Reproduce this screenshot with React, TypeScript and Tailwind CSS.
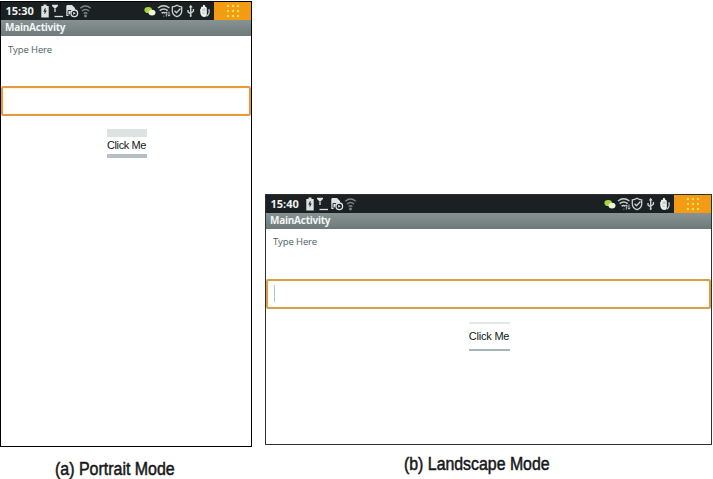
function LeftIcons() {
  return (
    <svg width="54" height="18" viewBox="0 0 54 18" fill="none" stroke="#dce2e1" strokeWidth="1.3">
      <path d="M4.5 2.5h3v1.6H9.7v11.4H2.3V4.1h2.2z" fill="#dce2e1" stroke="none" />
      <path d="M6.3 6 4.6 9.5h1.3l-.2 2.4 1.7-3.2H6.3z" fill="#1b2022" stroke="#1b2022" strokeWidth=".3" />
      <path d="M13 3.5h6M14 4l2 2 2-2M16 3.5V10" strokeWidth="1.3" />
      <path d="M15.5 14.5h8.5" strokeWidth="1.3" />
      <path d="M28 3h5l3 3v2l-4 1-2 5h-2.7V4z" fill="#dce2e1" stroke="none" />
      <path d="M29 8.5h3.5M29 8.5v4.5h2" stroke="#1b2022" strokeWidth=".9" />
      <circle cx="35.3" cy="11.3" r="3.3" />
      <path d="M34.2 9.8v3l2.5-1.5z" fill="#dce2e1" stroke="none" />
      <g stroke="#7d8685" strokeWidth="1.4">
        <path d="M41.3 6.2q5.2-4.4 10.4 0M43 9q3.5-3.2 7 0M44.6 11.5q1.9-1.7 3.8 0" />
        <circle cx="46.5" cy="14" r=".7" fill="#899291" />
      </g>
    </svg>
  );
}

function RightIcons() {
  return (
    <svg width="72" height="18" viewBox="0 0 72 18" fill="none" stroke="#c9d0ce" strokeWidth="1.3">
      <ellipse cx="6.2" cy="8" rx="3.8" ry="3.1" fill="#a6d63c" stroke="none" />
      <ellipse cx="10" cy="10.6" rx="3.5" ry="2.9" fill="#eef5d8" stroke="none" />
      <path d="M16 6q5.7-4.5 11.4 0M17.7 8.7q4-3.2 8 0M19.6 11.2q1.8-1.4 3.6-.3" strokeWidth="1.5" />
      <path d="M21.5 14.2h.8M24.3 10v4.5M22.8 11.5l1.5-1.7 1.5 1.7M27 9.5V14M25.7 12.7l1.3 1.5 1.3-1.5" strokeWidth=".9" />
      <path d="M35 3.3q2.2 1.5 4.7 1.6V9q0 3.8-4.7 5.7-4.7-1.9-4.7-5.7V4.9q2.5-.1 4.7-1.6z" />
      <path d="m32.5 8.7 2 2 4-4.2" />
      <path d="M48.7 4v10M46 8v1.8l2.7 2.2M51.4 7v2.2l-2.7 2.1" strokeWidth="1.4" />
      <path d="m46.8 5.4 1.9-2.6 1.9 2.6z" fill="#d3dad8" stroke="none" />
      <circle cx="48.7" cy="14" r="1" fill="#d3dad8" stroke="none" />
      <path d="M59 6.4q-.3-1.7.8-1.7l.9.3q0-2.2 1.2-2.2t1.3 2q1.6-.2 1.6 1.8v6.3q-.2 2-2.4 2-3.4 0-4-3.6l-.3-3.6q0-1 .9-1.3z" fill="#eef1f0" stroke="none" />
      <path d="M66.8 7.2q1.6 4.6-2.2 7" strokeWidth="1.3" />
      <path d="M61 6.5v3M62.8 6.2v3M60.3 11.2h2.6" stroke="#8f9997" strokeWidth=".7" />
    </svg>
  );
}

function AppGrid() {
  return (
    <div className="flex h-full w-[37px] items-center justify-center bg-[#f39b13] pl-px">
      <div className="grid grid-cols-3 gap-[3px]">
        {Array.from({ length: 9 }, (_, i) => (
          <span key={i} className="size-[2px] bg-[#fbe05c] shadow-[0_0_1px_#f8d04c]" />
        ))}
      </div>
    </div>
  );
}

function Header({ time }: { time: string }) {
  return (
    <>
      <div className="flex h-[18px] items-center bg-[#1b2022]">
        <span className="w-[38px] shrink-0 pl-[4.5px] text-[11px] leading-[18px] font-bold text-[#f0f2f2]">{time}</span>
        <LeftIcons />
        <div className="ml-auto flex h-full">
          <RightIcons />
          <AppGrid />
        </div>
      </div>
      <div className="h-[16px] bg-linear-to-b from-[#879392] to-[#6e7a7a] pl-[4px] text-[10px] leading-[15px] font-bold tracking-[-0.25px] text-[#f2f5f5]">
        MainActivity
      </div>
    </>
  );
}

export default function App() {
  return (
    <main className="flex h-[479px] w-[713px] items-start overflow-hidden bg-white font-['Open_Sans','Noto_Sans',sans-serif]">
      <figure className="w-[252px] pt-px">
        <div className="h-[446px] border border-black bg-white">
          <Header time="15:30" />
          <p className="mt-[6px] ml-[7px] h-[16px] text-[9.5px] leading-[16px] tracking-[-0.12px] text-[#4c6262]">Type Here</p>
          <div className="mt-[28px] h-[30px] rounded-[2px] border-2 border-[#e69a3f] bg-white shadow-[inset_0_0_2px_#ffe69b]" />
          <button className="mt-[13px] ml-[106px] block h-[29px] w-[40px] border-t-8 border-b-4 border-t-[#dce3e2] border-b-[#b5c0c2] bg-white font-['Liberation_Sans',sans-serif] text-[11px] leading-[16px] whitespace-nowrap text-[#111a20]">
            <span className="-mt-px -ml-px inline-block -translate-y-px tracking-[-0.4px]">Click Me</span>
          </button>
        </div>
        <figcaption className="mt-[11px] ml-[55px] h-[22px] font-['Liberation_Sans',sans-serif] text-[17.5px] leading-[22px] whitespace-nowrap text-[#171717]">
          <span className="inline-block origin-left scale-x-[0.912] [-webkit-text-stroke:0.5px_#171717]">(a) Portrait Mode</span>
        </figcaption>
      </figure>
      <figure className="ml-[13px] w-[447px] pt-[194px]">
        <div className="h-[251px] border border-[#303030] bg-white">
          <Header time="15:40" />
          <p className="mt-[5px] ml-[7px] h-[16px] text-[9.5px] leading-[16px] tracking-[-0.12px] text-[#4c6262]">Type Here</p>
          <div className="mt-[29px] h-[30px] rounded-[2px] border-2 border-[#d6a04e] bg-white pt-[4px] pl-[6px] shadow-[inset_0_0_2px_#ffe69b]">
            <div className="h-[17px] w-px bg-[#b5cabe]" />
          </div>
          <button className="mt-[13px] ml-[203px] block h-[29px] w-[41px] border-t-2 border-b-2 border-t-[#e0e8ea] border-b-[#a5b6bb] bg-white font-['Liberation_Sans',sans-serif] text-[11px] leading-[24px] whitespace-nowrap text-[#111a20]">
            <span className="-ml-px inline-block -translate-y-px tracking-[-0.2px]">Click Me</span>
          </button>
        </div>
        <figcaption className="mt-[8px] ml-[139px] h-[22px] font-['Liberation_Sans',sans-serif] text-[17.5px] leading-[22px] whitespace-nowrap text-[#171717]">
          <span className="inline-block origin-left scale-x-[0.907] [-webkit-text-stroke:0.5px_#171717]">(b) Landscape Mode</span>
        </figcaption>
      </figure>
    </main>
  );
}
